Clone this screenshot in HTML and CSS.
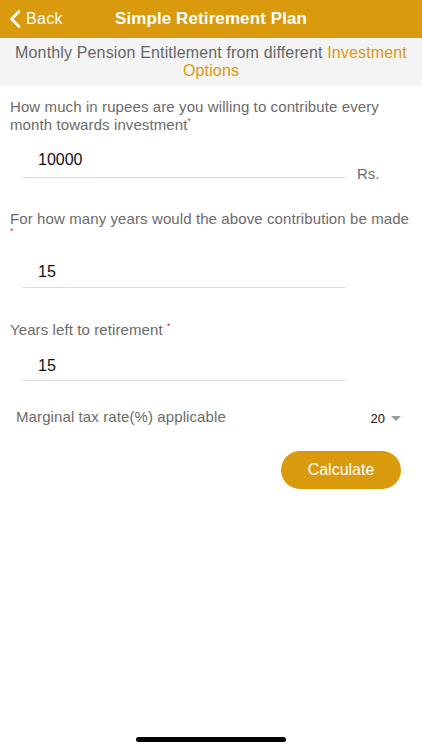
FILE: index.html
```html
<!DOCTYPE html>
<html>
<head>
<meta charset="utf-8">
<link rel="stylesheet" href="styles.css">
</head>
<body>
<div class="app">
  <header class="topbar">
    <div class="back">
      <svg class="chev" width="12" height="18" viewBox="0 0 12 18"><path d="M10 1.5 L2.5 9 L10 16.5" fill="none" stroke="#fff" stroke-width="2.6" stroke-linecap="round" stroke-linejoin="round"/></svg>
      <span>Back</span>
    </div>
    <h1 class="title">Simple Retirement Plan</h1>
  </header>
  <div class="subhead">Monthly Pension Entitlement from different <span class="accent">Investment Options</span></div>

  <main class="form">
    <div class="field">
      <p class="label l1">How much in rupees are you willing to contribute every month towards investment<sup class="req">*</sup></p>
      <div class="inputrow">
        <div class="input">10000</div>
        <span class="unit">Rs.</span>
      </div>
    </div>

    <div class="field">
      <p class="label l2">For how many years would the above contribution be made</p>
      <span class="req lone">*</span>
      <div class="inputrow r2">
        <div class="input mid">15</div>
      </div>
    </div>

    <div class="field">
      <p class="label l3">Years left to retirement <sup class="req">*</sup></p>
      <div class="inputrow r3">
        <div class="input short">15</div>
      </div>
    </div>

    <div class="taxrow">
      <span class="taxlabel">Marginal tax rate(%) applicable</span>
      <span class="select">20 <svg width="10" height="6" viewBox="0 0 10 6"><path d="M0 0 H10 L5 5 Z" fill="#9a9a9a"/></svg></span>
    </div>

    <div class="btnrow">
      <button class="calc">Calculate</button>
    </div>
  </main>
  <div class="homebar"></div>
</div>
</body>
</html>
```
FILE: styles.css
```css
* { box-sizing: border-box; }
html, body { margin: 0; padding: 0; background: #fff; }
body { font-family: "Liberation Sans", Arial, Helvetica, sans-serif; }
.app { width: 422px; height: 750px; position: relative; overflow: hidden; background: #fff; }

.topbar {
  height: 38px;
  background: #d99a0e;
  display: flex;
  align-items: center;
  justify-content: center;
  position: relative;
}
.back {
  position: absolute;
  left: 9px;
  top: 0;
  height: 38px;
  display: flex;
  align-items: center;
  gap: 5px;
  color: #fff;
  font-size: 16px;
  letter-spacing: 0.3px;
}
.chev { display: block; margin-top: -1px; }
.title {
  margin: 0;
  color: #fff;
  font-size: 17px;
  font-weight: bold;
  letter-spacing: 0.1px;
}

.subhead {
  background: #f4f4f4;
  height: 48px;
  padding: 6px 8px 0;
  text-align: center;
  color: #666;
  font-size: 16px;
  line-height: 18px;
  letter-spacing: 0.15px;
}
.accent { color: #d99a0e; }

.label {
  margin: 0;
  color: #6b6b6b;
  font-size: 15px;
  line-height: 18px;
  letter-spacing: 0.1px;
}
.l1 { padding: 12px 10px 0 10px; }
.l2 { padding: 32px 4px 0 10px; white-space: nowrap; }
.l3 { padding: 33px 10px 0 10px; }
.req { color: #e0302a; font-size: 9px; }
sup.req { vertical-align: 6px; line-height: 0; }
.lone { display: block; padding-left: 10px; line-height: 6px; height: 6px; margin-top: 0; }

.inputrow {
  display: flex;
  align-items: flex-end;
  padding-left: 22px;
}
.input {
  width: 324px;
  border-bottom: 1px solid #dcdcdc;
  padding: 0 0 8px 16px;
  color: #111;
  font-size: 16px;
  line-height: 18px;
}
.input.mid { padding-bottom: 6px; }
.input.short { padding-bottom: 5px; }
.l1 + .inputrow { margin-top: 17px; }
.r2 { margin-top: 29px; }
.r3 { margin-top: 18px; }
.unit {
  color: #6b6b6b;
  font-size: 15px;
  margin-left: 11px;
  margin-bottom: -4px;
}

.taxrow {
  display: flex;
  align-items: center;
  justify-content: space-between;
  padding: 26px 21px 0 16px;
}
.taxlabel { color: #6b6b6b; font-size: 15px; letter-spacing: 0.1px; }
.select {
  color: #111;
  font-size: 13px;
  display: flex;
  align-items: center;
  gap: 6px;
  padding-top: 4px;
}

.btnrow {
  display: flex;
  justify-content: flex-end;
  padding: 25px 21px 0 0;
}
.calc {
  width: 120px;
  height: 38px;
  border: none;
  border-radius: 19px;
  background: #d99a0e;
  color: #fff;
  font-family: "Liberation Sans", Arial, sans-serif;
  font-size: 16px;
  padding: 0;
}

.homebar {
  position: absolute;
  left: 136px;
  bottom: 8px;
  width: 150px;
  height: 5px;
  border-radius: 3px;
  background: #000;
}
```
